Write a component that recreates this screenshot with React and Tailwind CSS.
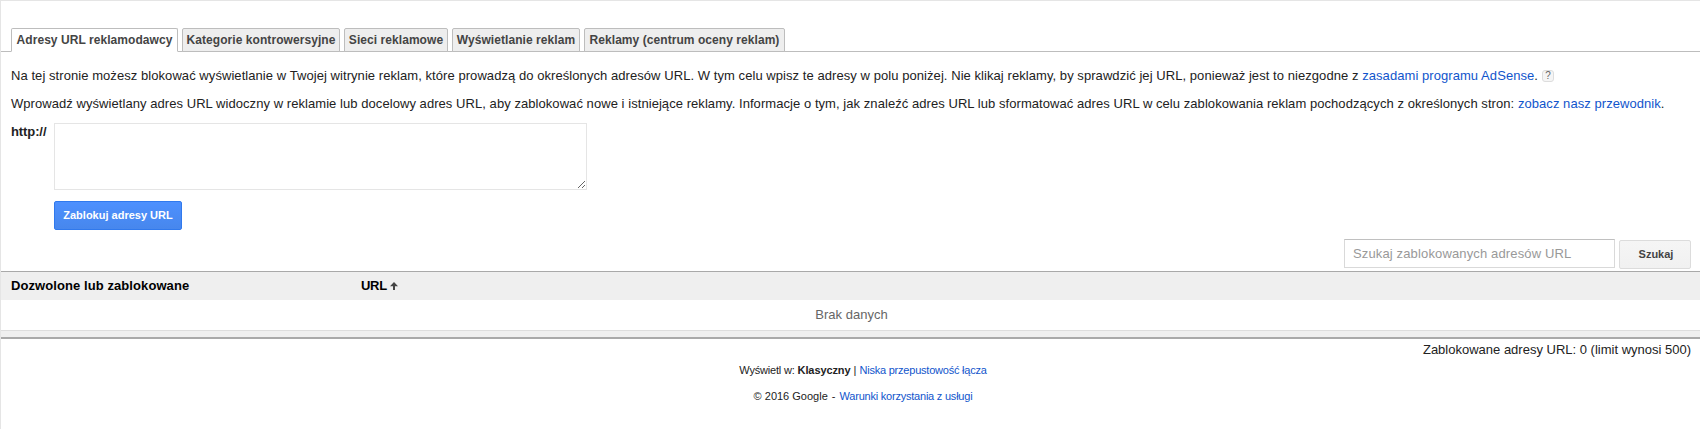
import React from 'react';

const tabs = [
  { label: 'Adresy URL reklamodawcy', width: 'w-[167px]', active: true },
  { label: 'Kategorie kontrowersyjne', width: 'w-[158px]' },
  { label: 'Sieci reklamowe', width: 'w-[104px]' },
  { label: 'Wyświetlanie reklam', width: 'w-[128px]' },
  { label: 'Reklamy (centrum oceny reklam)', width: 'w-[201px]' },
];

const Tab = ({ label, width, active }) => (
  <button
    className={`h-6 border rounded-t-[2px] border-[#bdbdbd] text-[12px] tracking-[0.06px] font-bold leading-[22px] whitespace-nowrap text-[#444] ${width} ${
      active ? 'bg-white border-b-white' : 'bg-[#eee]'
    }`}
  >
    {label}
  </button>
);

const Link = ({ children, className = '' }) => (
  <a href="#" className={`text-[#15c] ${className}`}>{children}</a>
);

const BlockForm = () => (
  <div className="flex pl-2.5 mt-2.5">
    <label className="w-[43px] text-[13px] font-bold leading-[18px] tracking-[-0.1px]">http://</label>
    <div className="flex flex-col items-start">
      <textarea className="block w-[533px] h-[67px] border border-[#e5e5e5] resize" />
      <button className="mt-[11px] w-32 h-[29px] rounded-xs border border-[#3079ed] bg-linear-to-b from-[#4d90fe] to-[#4787ed] text-[11px] font-bold text-white whitespace-nowrap">
        Zablokuj adresy URL
      </button>
    </div>
  </div>
);

const SearchBar = () => (
  <div className="flex justify-end gap-1 pr-[9px] mt-[9px] h-8">
    <input
      placeholder="Szukaj zablokowanych adresów URL"
      className="w-[271px] h-[29px] border border-[#d9d9d9] border-t-[#c0c0c0] px-2 text-[13px] tracking-[0.14px] placeholder:text-[#999]"
    />
    <button className="mt-px w-[72px] h-[29px] rounded-xs border border-[#dcdcdc] bg-linear-to-b from-[#f5f5f5] to-[#f1f1f1] pl-0.5 text-[11px] font-bold text-[#444]">
      Szukaj
    </button>
  </div>
);

const UrlTable = () => (
  <div className="text-[13px]">
    <div className="flex h-[29px] border-t border-[#a9a9a9] bg-[#efefef] pl-2.5 font-bold leading-[27px] text-black">
      <div className="w-[350px] tracking-[0.08px]">Dozwolone lub zablokowane</div>
      <div className="flex">
        <span className="tracking-[-0.3px]">URL</span>
        <svg width="8" height="8" viewBox="0 0 8 8" fill="#444" className="mt-[10px] ml-[3px]">
          <path d="M4 0 8 4.2H5V8H3V4.2H0z" />
        </svg>
      </div>
    </div>
    <div className="h-[30px] pl-0.5 text-center leading-[29px] text-[#666]">Brak danych</div>
    <div className="h-[9px] border-t border-t-[#ddd] border-b-2 border-b-[#a9a9a9] bg-[#efefef]"></div>
    <div className="pr-[9px] text-right leading-[22px]">Zablokowane adresy URL: 0 (limit wynosi 500)</div>
  </div>
);

const App = () => {
  return (
    <div className="h-[429px] overflow-hidden bg-white border-t border-l border-[#e5e5e5] font-['Liberation_Sans',Arial,sans-serif] text-[#222]">
      <div className="flex gap-1 h-[51px] pt-[27px] pl-2.5 border-b border-[#bdbdbd]">
        {tabs.map((tab) => (
          <Tab key={tab.label} {...tab} />
        ))}
      </div>

      <div className="pl-2.5 pt-[15px] text-[13px] leading-[18px] whitespace-nowrap">
        <p className="flex items-center mb-2.5 tracking-[0.063px]">
          <span>
            Na tej stronie możesz blokować wyświetlanie w Twojej witrynie reklam, które prowadzą do określonych adresów URL. W tym celu wpisz te adresy w polu poniżej. Nie klikaj reklamy, by sprawdzić jej URL, ponieważ jest to niezgodne z <Link>zasadami programu AdSense</Link>.
          </span>
          <span className="ml-1 flex items-center justify-center size-3 rounded-[3px] border border-[#ddd] bg-[#f5f5f5] text-[10px] text-[#666]">?</span>
        </p>
        <p className="tracking-[0.059px]">
          Wprowadź wyświetlany adres URL widoczny w reklamie lub docelowy adres URL, aby zablokować nowe i istniejące reklamy. Informacje o tym, jak znaleźć adres URL lub sformatować adres URL w celu zablokowania reklam pochodzących z określonych stron: <Link>zobacz nasz przewodnik</Link>.
        </p>
      </div>

      <BlockForm />
      <SearchBar />
      <UrlTable />

      <footer className="pl-[25px] text-center text-[11px] leading-4 mt-px">
        <p>
          <span className="tracking-[-0.2px]">Wyświetl w:</span> <b className="tracking-[-0.1px]">Klasyczny</b> | <Link className="tracking-[-0.22px]">Niska przepustowość łącza</Link>
        </p>
        <p className="mt-2.5">
          © 2016 Google <span className="mx-px">-</span> <Link className="tracking-[-0.22px]">Warunki korzystania z usługi</Link>
        </p>
      </footer>
    </div>
  );
};

export default App;
